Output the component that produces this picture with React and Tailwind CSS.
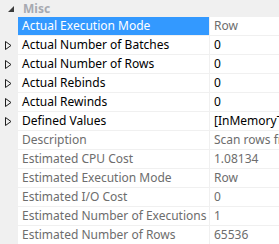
import React from 'react'

const rows = [
  { name: 'Actual Execution Mode', value: 'Row', selected: true, muted: false, valueMuted: true },
  { name: 'Actual Number of Batches', value: '0', expand: true },
  { name: 'Actual Number of Rows', value: '0', expand: true },
  { name: 'Actual Rebinds', value: '0', expand: true },
  { name: 'Actual Rewinds', value: '0', expand: true },
  { name: 'Defined Values', value: '[InMemoryTable]', expand: true },
  { name: 'Description', value: 'Scan rows from a table', muted: true },
  { name: 'Estimated CPU Cost', value: '1.08134', muted: true },
  { name: 'Estimated Execution Mode', value: 'Row', muted: true },
  { name: 'Estimated I/O Cost', value: '0', muted: true },
  { name: 'Estimated Number of Executions', value: '1', muted: true },
  { name: 'Estimated Number of Rows', value: '65536', muted: true },
]

function Expander() {
  return (
    <svg width="7" height="9" viewBox="0 0 7 9" className="block">
      <path d="M0.5 0.5 L6 4.5 L0.5 8.5 Z" fill="none" stroke="#1e1e1e" strokeWidth="1" />
    </svg>
  )
}

export default function App() {
  return (
    <div className="w-[279px] h-[244px] overflow-hidden bg-white text-[12px] leading-none" style={{ fontFamily: '"Noto Sans", "Open Sans", sans-serif' }}>
      <div className="flex h-[17px] items-center bg-[#f0f0f0]">
        <div className="w-[18px] flex justify-center">
          <svg width="6" height="6" viewBox="0 0 6 6" className="block ml-[3px]">
            <path d="M6 0 L6 6 L0 6 Z" fill="#3c3c3c" />
          </svg>
        </div>
        <span className="pl-[5px] font-bold text-[#a7a9b0]">Misc</span>
      </div>
      {rows.map((r) => (
        <div key={r.name} className="flex h-[19px]">
          <div className="w-[18px] shrink-0 bg-[#f0f0f0] flex items-center pl-[5px]">
            {r.expand && <Expander />}
          </div>
          <div className="flex flex-1 border-b border-[#f0f0f0] min-w-0">
            <div
              className={
                'w-[192px] shrink-0 flex items-center pl-[4px] whitespace-nowrap overflow-hidden border-r border-[#f0f0f0] ' +
                (r.selected ? 'bg-[#3399ff] text-white' : r.muted ? 'text-[#6d6d6d]' : 'text-black')
              }
            >
              {r.name}
            </div>
            <div
              className={
                'flex-1 flex items-center pl-[4px] whitespace-nowrap overflow-hidden ' +
                (r.muted || r.valueMuted ? 'text-[#6d6d6d]' : 'text-black')
              }
            >
              {r.value}
            </div>
          </div>
        </div>
      ))}
    </div>
  )
}
